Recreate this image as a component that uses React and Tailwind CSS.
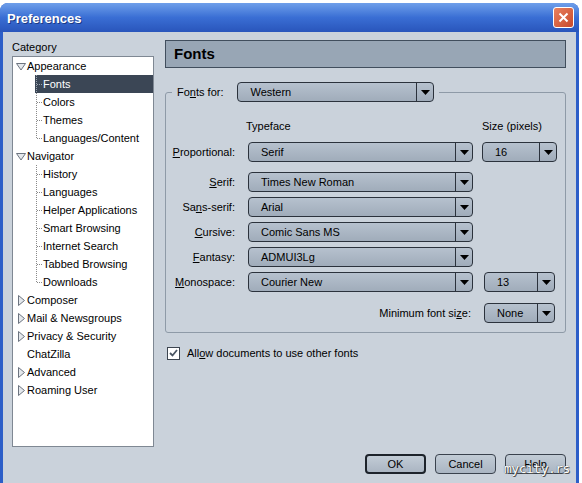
import React from "react"

// one node of the category tree
function Expander({ open }) {
  if (open) {
    return (
      <svg width="10" height="9" viewBox="0 0 10 9" className="shrink-0">
        <path d="M0.5 1.5 L9.5 1.5 L5 8 Z" fill="#e4e8ec" stroke="#6c7480" />
      </svg>
    )
  }
  return (
    <svg width="10" height="11" viewBox="0 0 10 11" className="shrink-0">
      <path d="M2.5 0.5 L8.5 5.5 L2.5 10.5 Z" fill="#e4e8ec" stroke="#6c7480" />
    </svg>
  )
}

function ParentRow({ label, open, leaf }) {
  return (
    <div className="flex h-[18px] items-center pl-[3px]">
      <div className="flex w-[10px] justify-center">{!leaf && <Expander open={open} />}</div>
      <span className="ml-[1px] leading-[18px]">{label}</span>
    </div>
  )
}

function ChildRow({ label, last, selected }) {
  return (
    <div className="flex h-[18px] items-center pl-[22px]">
      <div
        className={
          "flex h-full flex-1 items-center " +
          (selected ? "bg-[#3b4655] text-white" : "")
        }
      >
        <svg width="8" height="18" viewBox="0 0 8 18" className="shrink-0">
          <line
            x1="1.5"
            y1="0"
            x2="1.5"
            y2={last ? 9 : 18}
            stroke={selected ? "#9aa4b0" : "#8a8a8a"}
            strokeDasharray="1 1"
          />
          <line
            x1="2"
            y1="9.5"
            x2="8"
            y2="9.5"
            stroke={selected ? "#9aa4b0" : "#8a8a8a"}
            strokeDasharray="1 1"
          />
        </svg>
        <span className="leading-[18px]">{label}</span>
      </div>
    </div>
  )
}

function Select({ value, className = "" }) {
  return (
    <div
      className={
        "flex h-[20px] shrink-0 overflow-hidden rounded-[4px] border border-[#2b323c] bg-gradient-to-b from-[#b6c1ce] to-[#a0acba] " +
        className
      }
    >
      <span className="flex-1 truncate pl-[12px] leading-[18px]">{value}</span>
      <span className="flex w-[17px] items-center justify-center border-l border-[#2b323c]">
        <svg width="9" height="5" viewBox="0 0 9 5">
          <path d="M0 0 L9 0 L4.5 5 Z" fill="#000" />
        </svg>
      </span>
    </div>
  )
}

function FontRow({ label, keyIdx, value, size, sizeClass = "", className = "" }) {
  return (
    <div className={"flex h-[20px] items-center " + className}>
      <span className="w-[68px] text-right leading-[20px]">
        {label.slice(0, keyIdx)}
        <u>{label[keyIdx]}</u>
        {label.slice(keyIdx + 1)}:
      </span>
      <Select value={value} className="ml-[13px] w-[225px]" />
      {size && <Select value={size} className={sizeClass} />}
    </div>
  )
}

function Button({ children, primary }) {
  return (
    <button
      className={
        "h-[20px] w-[61px] rounded-[4px] bg-gradient-to-b from-[#c2ccd6] to-[#aab5c2] text-center leading-[16px] " +
        (primary ? "border-2 border-[#1d232b]" : "border border-[#3a424d]")
      }
    >
      {children}
    </button>
  )
}

export default function App() {
  const appearance = ["Fonts", "Colors", "Themes", "Languages/Content"]
  const navigator = [
    "History",
    "Languages",
    "Helper Applications",
    "Smart Browsing",
    "Internet Search",
    "Tabbed Browsing",
    "Downloads",
  ]

  return (
    <div className="relative h-[483px] w-[582px] overflow-hidden bg-white font-['Liberation_Sans',Arial,sans-serif] text-[11px] text-black">
      <div className="mt-[3px] flex h-[480px] w-[579px] flex-col overflow-hidden rounded-t-[8px] bg-[#2c5ec8]">
        {/* title bar */}
        <div className="flex h-[29px] shrink-0 items-center justify-between bg-gradient-to-b from-[#6f9fea] via-[#3a6ed4] to-[#2955bb] pl-[7px] pr-[5px]">
          <span className="mt-[3px] text-[13px] font-bold text-white [text-shadow:1px_1px_0_#1a3a86]">
            Preferences
          </span>
          <div className="flex h-[21px] w-[21px] items-center justify-center rounded-[3px] border border-white bg-gradient-to-br from-[#e8805e] to-[#c8482a]">
            <svg width="11" height="11" viewBox="0 0 11 11">
              <path d="M1.5 1.5 L9.5 9.5 M9.5 1.5 L1.5 9.5" stroke="#fff" strokeWidth="2" />
            </svg>
          </div>
        </div>

        {/* dialog body */}
        <div className="mx-[3px] flex flex-1 bg-[#cad2db] pt-[8px]">
          {/* category tree */}
          <div className="ml-[9px] flex w-[142px] flex-col">
            <span className="leading-[14px]">Category</span>
            <div className="mt-[2px] h-[391px] border border-[#7f8893] bg-white">
              <ParentRow label="Appearance" open />
              {appearance.map((l, i) => (
                <ChildRow key={l} label={l} selected={i === 0} last={i === appearance.length - 1} />
              ))}
              <ParentRow label="Navigator" open />
              {navigator.map((l, i) => (
                <ChildRow key={l} label={l} last={i === navigator.length - 1} />
              ))}
              <ParentRow label="Composer" />
              <ParentRow label="Mail & Newsgroups" />
              <ParentRow label="Privacy & Security" />
              <ParentRow label="ChatZilla" leaf />
              <ParentRow label="Advanced" />
              <ParentRow label="Roaming User" />
            </div>
          </div>

          {/* fonts panel */}
          <div className="ml-[11px] flex w-[401px] flex-col">
            <div className="flex h-[28px] items-center border border-[#414e5d] bg-[#98a6b5] pl-[8px] text-[15px] font-bold">
              Fonts
            </div>

            <fieldset className="mt-[14px] rounded-[3px] border border-[#8e9aa7] p-0 pb-[9px]">
              <legend className="ml-[6px] flex items-center px-[5px]">
                <span>
                  Fo<u>n</u>ts for:
                </span>
                <Select value="Western" className="ml-[14px] w-[197px]" />
              </legend>

              <div className="mt-[17px] flex h-[14px] items-center leading-[14px]">
                <span className="ml-[80px] w-[236px]">Typeface</span>
                <span>Size (pixels)</span>
              </div>
              <FontRow
                label="Proportional"
                keyIdx={0}
                value="Serif"
                size="16"
                sizeClass="ml-[9px] w-[75px]"
                className="mt-[9px] pl-[1px]"
              />
              <FontRow label="Serif" keyIdx={0} value="Times New Roman" className="mt-[10px] pl-[1px]" />
              <FontRow label="Sans-serif" keyIdx={2} value="Arial" className="mt-[5px] pl-[1px]" />
              <FontRow label="Cursive" keyIdx={0} value="Comic Sans MS" className="mt-[5px] pl-[1px]" />
              <FontRow label="Fantasy" keyIdx={0} value="ADMUI3Lg" className="mt-[5px] pl-[1px]" />
              <FontRow
                label="Monospace"
                keyIdx={0}
                value="Courier New"
                size="13"
                sizeClass="ml-[11px] w-[71px]"
                className="mt-[5px] pl-[1px]"
              />
              <div className="mt-[11px] flex h-[20px] items-center justify-end pr-[10px]">
                <span>
                  Minimum font si<u>z</u>e:
                </span>
                <Select value="None" className="ml-[13px] w-[71px]" />
              </div>
            </fieldset>

            <label className="mt-[12px] flex items-center pl-[2px]">
              <span className="flex h-[13px] w-[13px] items-center justify-center border border-[#3d4550] bg-white">
                <svg width="9" height="8" viewBox="0 0 9 8">
                  <path d="M1 4 L3.5 6.5 L8 1" fill="none" stroke="#4a5563" strokeWidth="1.8" />
                </svg>
              </span>
              <span className="ml-[7px]">
                All<u>o</u>w documents to use other fonts
              </span>
            </label>

            <div className="mt-auto mb-[9px] flex justify-end gap-[9px]">
              <Button primary>OK</Button>
              <Button>Cancel</Button>
              <Button>Help</Button>
            </div>
          </div>
        </div>
      </div>

      {/* watermark */}
      <span className="absolute left-[504px] top-[459px] font-['DejaVu_Sans_Mono',monospace] text-[13px] tracking-[-0.5px] text-white [text-shadow:0_0_1px_#333,1px_1px_0_#555]">
        mycity.rs
      </span>
    </div>
  )
}
